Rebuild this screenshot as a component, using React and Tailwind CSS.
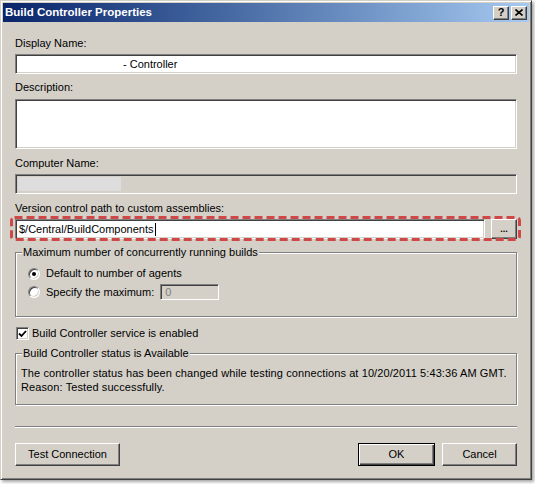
import React from "react";

const sunken =
  "border border-t-[#808080] border-l-[#808080] border-b-white border-r-white shadow-[inset_1px_1px_0_#404040,inset_-1px_-1px_0_#d4d0c8]";
const raised =
  "border border-t-white border-l-white border-b-[#404040] border-r-[#404040] shadow-[inset_-1px_-1px_0_#808080]";
const etched =
  "border border-[#808080] shadow-[inset_1px_1px_0_#fff,1px_1px_0_#fff]";

function Radio({ checked }) {
  return (
    <div
      className={`w-[12px] h-[12px] rounded-full bg-white flex items-center justify-center ${sunken}`}
    >
      {checked && <div className="w-[4px] h-[4px] rounded-full bg-black" />}
    </div>
  );
}

export default function App() {
  return (
    <div className="w-[535px] h-[484px] bg-white font-['Liberation_Sans',Arial,sans-serif] text-[11px] leading-[13px] text-black">
      <div className="w-[532px] h-[480px] flex flex-col p-[2px] bg-[#d4d0c8] border border-t-[#d4d0c8] border-l-[#d4d0c8] border-b-[#404040] border-r-[#404040] shadow-[inset_1px_1px_0_#fff,inset_-1px_-1px_0_#808080,2px_2px_3px_rgba(0,0,0,0.35)]">
        {/* Title bar */}
        <div className="h-[19px] flex items-center justify-between pl-[2px] pr-[2px] bg-gradient-to-r from-[#0a246a] to-[#a6caf0]">
          <span className="text-white font-bold text-[11.5px]">Build Controller Properties</span>
          <div className="flex gap-[2px]">
            <div className={`w-[16px] h-[14px] bg-[#d4d0c8] flex items-center justify-center font-bold text-[11px] leading-none ${raised}`}>
              ?
            </div>
            <div className={`w-[16px] h-[14px] bg-[#d4d0c8] flex items-center justify-center ${raised}`}>
              <svg width="8" height="7" viewBox="0 0 8 7">
                <path d="M0.5 0.5 L7.5 6.5 M7.5 0.5 L0.5 6.5" stroke="#000" strokeWidth="1.6" />
              </svg>
            </div>
          </div>
        </div>

        {/* Body */}
        <div className="flex flex-col px-[12px]">
          <div className="mt-[15px]">Display Name:</div>
          <div className={`mt-[4px] h-[20px] bg-white flex items-center pl-[107px] ${sunken}`}>
            - Controller
          </div>

          <div className="mt-[7px]">Description:</div>
          <div className={`mt-[5px] h-[50px] bg-white ${sunken}`} />

          <div className="mt-[8px]">Computer Name:</div>
          <div className={`mt-[4px] h-[20px] bg-[#d4d0c8] flex p-[2px] ${sunken}`}>
            <div className="w-[103px] bg-[#dddddd]" />
          </div>

          <div className="mt-[8px]">Version control path to custom assemblies:</div>
          <div className="mt-[4px] h-[20px] flex gap-[6px] relative">
            <div className={`flex-1 bg-white flex items-center pl-[3px] ${sunken}`}>
              $/Central/BuildComponents
              <span className="w-px h-[13px] bg-black ml-px" />
            </div>
            <div className={`w-[26px] bg-[#d4d0c8] flex items-end justify-center pb-[4px] font-bold text-[9px] leading-none ${raised}`}>
              ...
            </div>
            <svg
              className="absolute left-[-5px] top-[-3px]"
              width="511"
              height="25"
              viewBox="0 0 511 25"
            >
              <rect
                x="1.5"
                y="1.5"
                width="508"
                height="22"
                rx="3"
                fill="none"
                stroke="#cf4848"
                strokeWidth="3"
                strokeDasharray="8 4"
              />
            </svg>
          </div>

          <fieldset className={`mt-[7px] pl-[6px] pb-[14px] ${etched}`}>
            <legend className="px-[1px] bg-[#d4d0c8]">
              Maximum number of concurrently running builds
            </legend>
            <div className="mt-[8px] ml-[6px] flex items-center gap-[6px] h-[13px]">
              <Radio checked />
              <span>Default to number of agents</span>
            </div>
            <div className="mt-[2px] ml-[6px] flex items-center gap-[6px] h-[20px]">
              <Radio />
              <span>Specify the maximum:</span>
              <div className={`w-[59px] h-[16px] flex items-center pl-[4px] text-[#808080] ${sunken}`}>
                0
              </div>
            </div>
          </fieldset>

          <div className="mt-[10px] h-[13px] flex items-center gap-[3px] ml-[1px]">
            <div className={`w-[13px] h-[13px] bg-white flex items-center justify-center ${sunken}`}>
              <svg width="9" height="9" viewBox="0 0 9 9">
                <path d="M1 4.5 L3.5 7 L8 2" fill="none" stroke="#000" strokeWidth="1.8" />
              </svg>
            </div>
            <span>Build Controller service is enabled</span>
          </div>

          <fieldset className={`mt-[7px] pl-[6px] pb-[10px] ${etched}`}>
            <legend className="px-[1px] bg-[#d4d0c8]">Build Controller status is Available</legend>
            <div className="mt-[6px] -ml-[1px] leading-[14px] tracking-[0.1px]">
              <div>
                The controller status has been changed while testing connections at 10/20/2011 5:43:36 AM GMT.
              </div>
              <div>Reason: Tested successfully.</div>
            </div>
          </fieldset>

          <div className="mt-[21px] border-t border-t-[#808080] border-b border-b-white" />

          <div className="mt-[15px] flex items-center">
            <div className={`w-[105px] h-[23px] flex items-center justify-center bg-[#d4d0c8] ${raised}`}>
              Test Connection
            </div>
            <div className="flex-1" />
            <div className="w-[77px] h-[23px] flex items-center justify-center bg-[#d4d0c8] border border-black shadow-[inset_1px_1px_0_#fff,inset_-1px_-1px_0_#404040,inset_-2px_-2px_0_#808080]">
              OK
            </div>
            <div className={`ml-[7px] w-[75px] h-[23px] flex items-center justify-center bg-[#d4d0c8] ${raised}`}>
              Cancel
            </div>
          </div>
        </div>
      </div>
    </div>
  );
}
